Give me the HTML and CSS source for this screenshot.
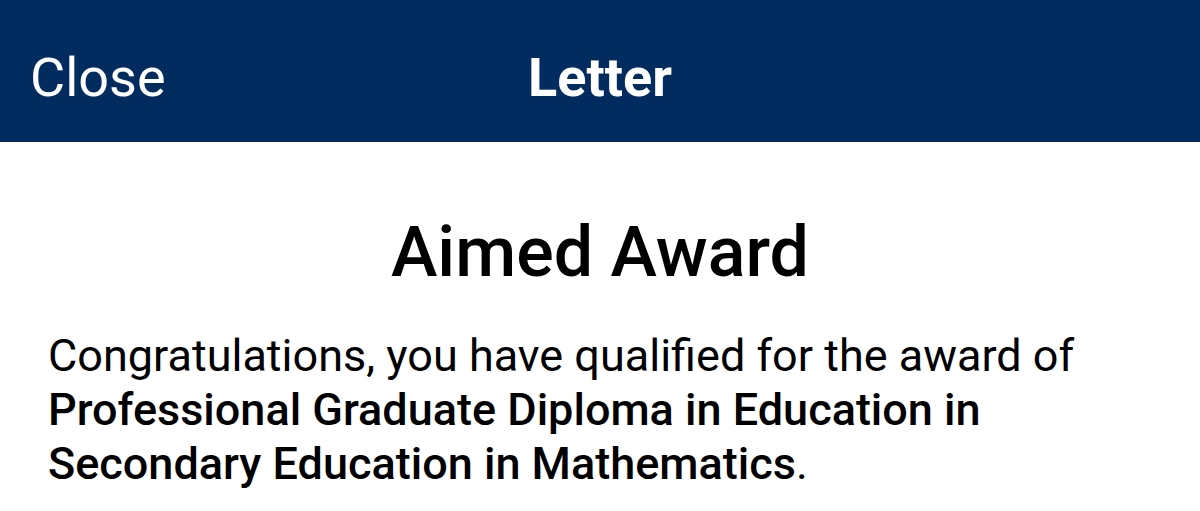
FILE: index.html
```html
<!DOCTYPE html>
<html>
<head>
<meta charset="utf-8">
<link rel="stylesheet" href="styles.css">
</head>
<body>
<header class="bar">
  <span class="close">Close</span>
  <span class="title">Letter</span>
  <span class="spacer"></span>
</header>
<main class="content">
  <h1 class="heading">Aimed Award</h1>
  <p class="text">Congratulations, you have qualified for the award of <strong>Professional Graduate Diploma in Education in Secondary Education in Mathematics</strong>.</p>
</main>
</body>
</html>
```
FILE: styles.css
```css
html, body {
  margin: 0;
  padding: 0;
  background: #ffffff;
  font-family: Roboto, "Liberation Sans", sans-serif;
  color: #000;
}
.bar {
  height: 142px;
  background: #022b5f;
  color: #fff;
  display: grid;
  grid-template-columns: 1fr auto 1fr;
  align-items: center;
  padding: 12px 30px 0;
  box-sizing: border-box;
}
.close {
  font-size: 54px;
  font-weight: 400;
  justify-self: start;
}
.title {
  font-size: 54px;
  font-weight: 700;
}
.content {
  padding: 0 48px;
}
.heading {
  margin: 68px 0 0;
  text-align: center;
  font-size: 70px;
  font-weight: 500;
  line-height: 84px;
}
.text {
  margin: 35px 0 0;
  font-size: 45px;
  line-height: 54px;
}
.text strong {
  font-weight: 500;
}
```
